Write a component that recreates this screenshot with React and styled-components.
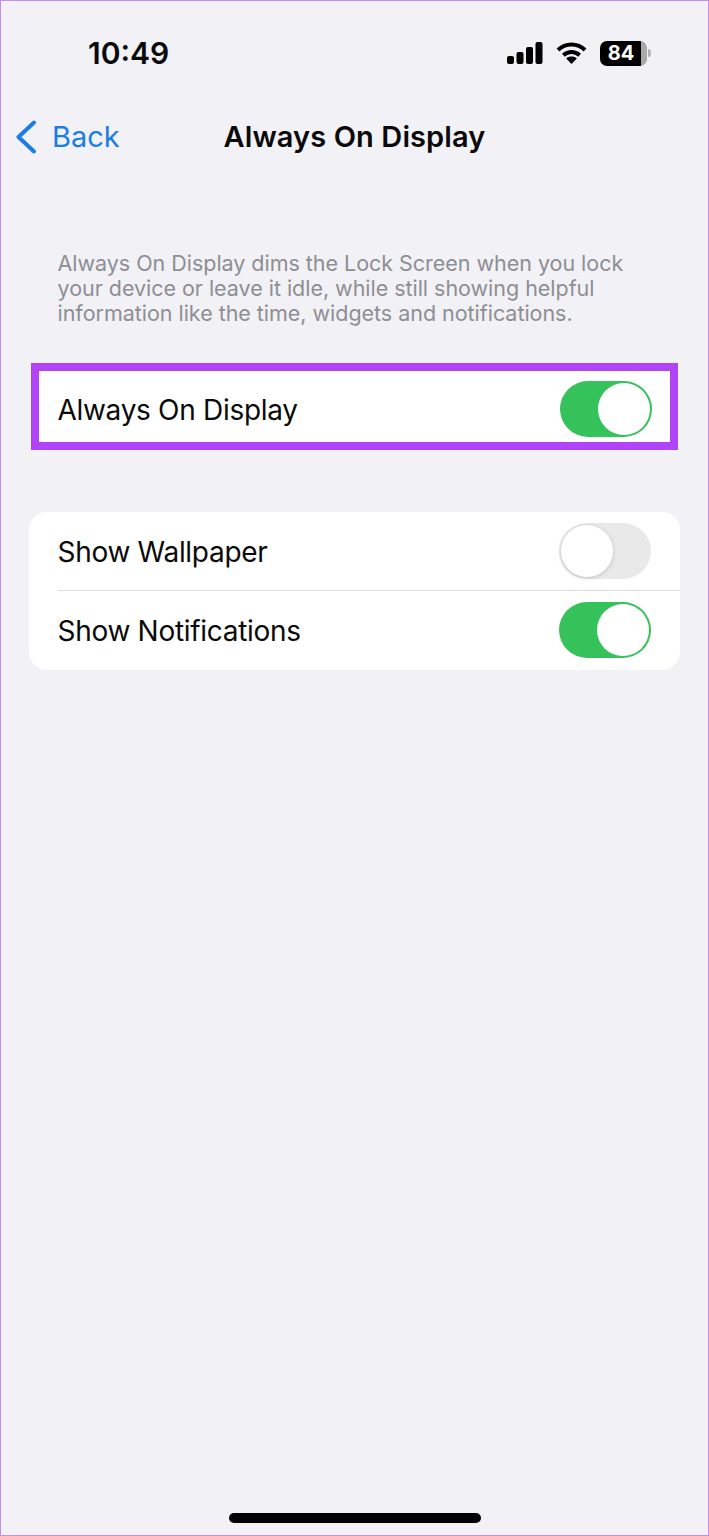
import styled, { createGlobalStyle } from "styled-components";

const GlobalStyle = createGlobalStyle`
  * {
    box-sizing: border-box;
  }

  html, body {
    margin: 0;
    padding: 0;
    background: #f1f1f6;
  }
`

const Toggle = ({ on }) => (
    <Track $on={on}>
        <Thumb $on={on}/>
    </Track>
);

const SignalIcon = () => (
    <svg width="36" height="22" viewBox="0 0 36 22">
        <rect x="0" y="14" width="7" height="8" rx="2"/>
        <rect x="9.5" y="10" width="7" height="12" rx="2"/>
        <rect x="19" y="5" width="7" height="17" rx="2"/>
        <rect x="28.5" y="0" width="7" height="22" rx="2"/>
    </svg>
);

const WifiIcon = () => (
    <svg width="31" height="22" viewBox="0 0 31 22" fill="none" stroke="#000" strokeWidth="4">
        <path d="M2 8 C 9.5 0.7 21.5 0.7 29 8"/>
        <path d="M7.4 13.2 C 12 9 19 9 23.6 13.2"/>
        <path fill="#000" stroke="none" d="M15.5 22 L10.2 16.4 C 13 14 18 14 20.8 16.4 Z"/>
    </svg>
);

const BackChevron = () => (
    <svg width="22" height="34" viewBox="0 0 22 34" fill="none" stroke="#1c7ee2" strokeWidth="4" strokeLinecap="round" strokeLinejoin="round">
        <path d="M19 2.5 L3.5 17 L19 31.5"/>
    </svg>
);

export default function App() {
    return (
        <Page>
            <GlobalStyle/>
            <StatusBar>
                <Clock>10:49</Clock>
                <StatusIcons>
                    <SignalIcon/>
                    <WifiIcon/>
                    <Battery>
                        <BatteryBody>84</BatteryBody>
                        <BatteryNub/>
                    </Battery>
                </StatusIcons>
            </StatusBar>

            <NavBar>
                <BackLink>
                    <BackChevron/>
                    <BackLabel>Back</BackLabel>
                </BackLink>
                <NavTitle>Always On Display</NavTitle>
            </NavBar>

            <Caption>
                Always On Display dims the Lock Screen when you lock<br/>
                your device or leave it idle, while still showing helpful<br/>
                information like the time, widgets and notifications.
            </Caption>

            <HighlightRow>
                <RowLabel>Always On Display</RowLabel>
                <Toggle on/>
            </HighlightRow>

            <Card>
                <Row>
                    <RowLabel>Show Wallpaper</RowLabel>
                    <Toggle/>
                </Row>
                <Row $divider>
                    <RowLabel>Show Notifications</RowLabel>
                    <Toggle on/>
                </Row>
            </Card>

            <HomeIndicator/>
        </Page>
    );
}

const Page = styled.div`
  display: flex;
  flex-direction: column;
  width: 709px;
  height: 1536px;
  overflow: hidden;
  background-color: #f1f1f6;
  border: 1.5px solid #c68cf2;
  font-family: Inter, "Liberation Sans", sans-serif;
  color: #0a0a0a;
`

const StatusBar = styled.div`
  display: flex;
  justify-content: space-between;
  align-items: center;
  height: 26px;
  margin-top: 39px;
  padding: 0 57px 0 87px;
`

const Clock = styled.div`
  font-size: 30px;
  font-weight: 600;
  line-height: 26px;
`

const StatusIcons = styled.div`
  display: flex;
  align-items: center;
  gap: 13px;
`

const Battery = styled.div`
  display: flex;
  align-items: center;
  gap: 1px;
`

const BatteryBody = styled.div`
  width: 47px;
  height: 25px;
  padding-right: 5px;
  border-radius: 7px;
  background: linear-gradient(90deg, #000 0 87%, #a9a9ac 87% 100%);
  color: #fff;
  font-size: 20px;
  font-weight: 700;
  line-height: 25px;
  text-align: center;
`

const BatteryNub = styled.div`
  width: 3px;
  height: 8px;
  border-radius: 0 3px 3px 0;
  background-color: #b4b4b8;
`

const NavBar = styled.div`
  position: relative;
  display: flex;
  justify-content: center;
  align-items: center;
  height: 36px;
  margin-top: 53px;
`

const BackLink = styled.div`
  position: absolute;
  left: 14px;
  top: 1px;
  display: flex;
  align-items: center;
  gap: 15px;
`

const BackLabel = styled.span`
  color: #1c7ee2;
  font-size: 29px;
  line-height: 34px;
`

const NavTitle = styled.div`
  font-size: 29px;
  font-weight: 600;
  line-height: 36px;
  letter-spacing: 0.1px;
`

const Caption = styled.p`
  margin: 96px 0 0;
  padding-left: 56.5px;
  color: #8e8e93;
  font-size: 21.5px;
  line-height: 25px;
  letter-spacing: -0.03px;
`

const HighlightRow = styled.div`
  display: flex;
  justify-content: space-between;
  align-items: center;
  height: 87px;
  margin: 37px 30px 0 29.5px;
  padding: 4px 18px 0 19px;
  background-color: #fff;
  border: 8px solid #b144f7;
`

const Card = styled.div`
  margin: 62px 28px 0 27.5px;
  background-color: #fff;
  border-radius: 18px;
`

const Row = styled.div`
  position: relative;
  display: flex;
  justify-content: space-between;
  align-items: center;
  height: ${(props) => (props.$divider ? "80px" : "78px")};
  padding: 0 29px 0 29px;

  &::before {
    content: "";
    display: ${(props) => (props.$divider ? "block" : "none")};
    position: absolute;
    top: 0;
    left: 29px;
    right: 0;
    height: 1px;
    background-color: #dcdce0;
  }
`

const RowLabel = styled.div`
  padding-top: 2px;
  font-size: 28px;
  line-height: 36px;
  letter-spacing: -0.3px;
`

const Track = styled.div`
  display: flex;
  flex-shrink: 0;
  justify-content: ${(props) => (props.$on ? "flex-end" : "flex-start")};
  align-items: center;
  width: 92px;
  height: 56px;
  padding: 0 2px;
  border-radius: 28px;
  background-color: ${(props) => (props.$on ? "#36c25b" : "#e9e9ea")};
`

const Thumb = styled.div`
  width: 52px;
  height: 52px;
  border-radius: 50%;
  background-color: #fff;
  box-shadow: ${(props) => (props.$on ? "none" : "0 1px 4px rgba(0, 0, 0, 0.18)")};
`

const HomeIndicator = styled.div`
  flex-shrink: 0;
  align-self: center;
  width: 252px;
  height: 10px;
  margin-top: auto;
  margin-bottom: 12.5px;
  border-radius: 5px;
  background-color: #000;
`
